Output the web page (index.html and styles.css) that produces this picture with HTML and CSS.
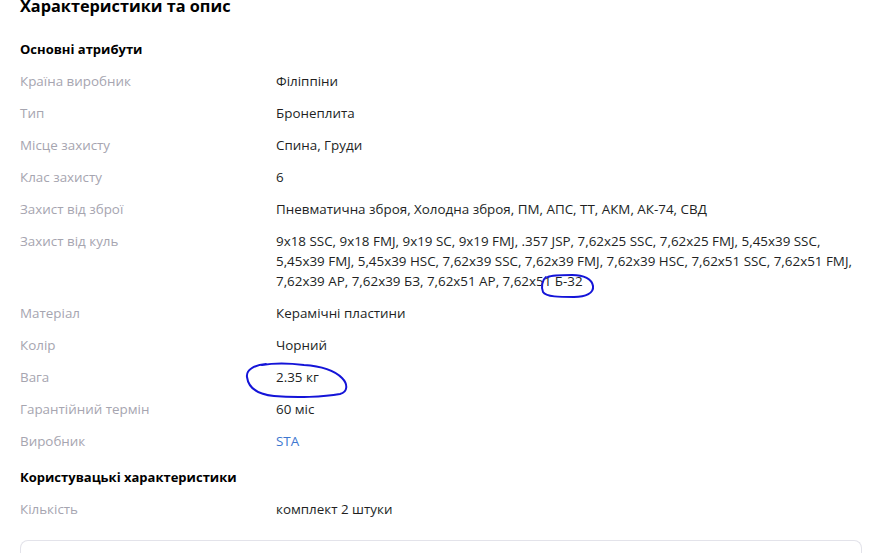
FILE: index.html
```html
<!DOCTYPE html>
<html lang="uk">
<head>
<meta charset="utf-8">
<link rel="stylesheet" href="styles.css">
</head>
<body>
<div class="page">
  <h2 class="title">Характеристики та опис</h2>
  <h3 class="group">Основні атрибути</h3>
  <dl class="specs">
    <div class="row"><dt>Країна виробник</dt><dd>Філіппіни</dd></div>
    <div class="row"><dt>Тип</dt><dd>Бронеплита</dd></div>
    <div class="row"><dt>Місце захисту</dt><dd>Спина, Груди</dd></div>
    <div class="row"><dt>Клас захисту</dt><dd>6</dd></div>
    <div class="row"><dt>Захист від зброї</dt><dd>Пневматична зброя, Холодна зброя, ПМ, АПС, ТТ, АКМ, АК-74, СВД</dd></div>
    <div class="row"><dt>Захист від куль</dt><dd>9x18 SSC, 9x18 FMJ, 9x19 SC, 9x19 FMJ, .357 JSP, 7,62x25 SSC, 7,62x25 FMJ, 5,45x39 SSC, 5,45x39 FMJ, 5,45x39 HSC, 7,62x39 SSC, 7,62x39 FMJ, 7,62x39 HSC, 7,62x51 SSC, 7,62x51 FMJ, 7,62x39 AP, 7,62x39 БЗ, 7,62x51 AP, 7,62x51 Б-32</dd></div>
    <div class="row"><dt>Матеріал</dt><dd>Керамічні пластини</dd></div>
    <div class="row"><dt>Колір</dt><dd>Чорний</dd></div>
    <div class="row"><dt>Вага</dt><dd>2.35 кг</dd></div>
    <div class="row"><dt>Гарантійний термін</dt><dd>60 міс</dd></div>
    <div class="row"><dt>Виробник</dt><dd><a class="link" href="#">STA</a></dd></div>
  </dl>
  <h3 class="group group-second">Користувацькі характеристики</h3>
  <dl class="specs">
    <div class="row"><dt>Кількість</dt><dd>комплект 2 штуки</dd></div>
  </dl>
  <div class="box"></div>
</div>
<svg class="mark mark-b32" width="60" height="28" viewBox="0 0 60 28">
  <path d="M8 6 C4 9 3 16 5 21 C8 26 22 26 36 26 C48 26 56 22 55 15 C54 8 46 4 34 4 C24 4 14 4 10 6" fill="none" stroke="#1414d8" stroke-width="2" stroke-linecap="round"/>
</svg>
<svg class="mark mark-weight" width="106" height="40" viewBox="0 0 106 40">
  <path d="M22 4 C10 5 2 10 3 17 C4 25 10 34 30 36 C52 38 80 37 96 34 C104 32 104 24 98 18 C90 10 76 6 60 5 C44 3 30 3 18 5" fill="none" stroke="#1414d8" stroke-width="2" stroke-linecap="round"/>
</svg>
</body>
</html>
```

FILE: styles.css
```css
html, body {
  margin: 0;
  padding: 0;
  background: #ffffff;
}
body {
  font-family: "Open Sans", "Noto Sans", sans-serif;
  color: #221f1f;
  font-size: 13.4px;
  overflow: hidden;
  height: 554px;
  position: relative;
}
.page {
  width: 842px;
  padding-left: 20px;
}
.title {
  margin: -6px 0 0;
  font-size: 16.3px;
  line-height: 24px;
  font-weight: 700;
  color: #000;
}
.group {
  margin: 21px 0 6px;
  font-size: 13px;
  line-height: 20px;
  font-weight: 700;
  color: #000;
}
.group-second {
  margin-top: 10px;
}
.specs {
  margin: 0;
}
.row {
  display: grid;
  grid-template-columns: 256px 1fr;
  padding: 6px 0;
  line-height: 20px;
}
.row dt {
  color: #a6a5b0;
}
.row dd {
  margin: 0;
  color: #221f1f;
}
.link {
  color: #3e77d0;
  text-decoration: none;
}
.box {
  margin-top: 15px;
  height: 12px;
  border: 1px solid #e3e3ea;
  border-bottom: none;
  border-radius: 8px 8px 0 0;
}
.mark {
  position: absolute;
}
.mark-b32 {
  left: 538px;
  top: 271px;
}
.mark-weight {
  left: 244px;
  top: 360px;
}
```
